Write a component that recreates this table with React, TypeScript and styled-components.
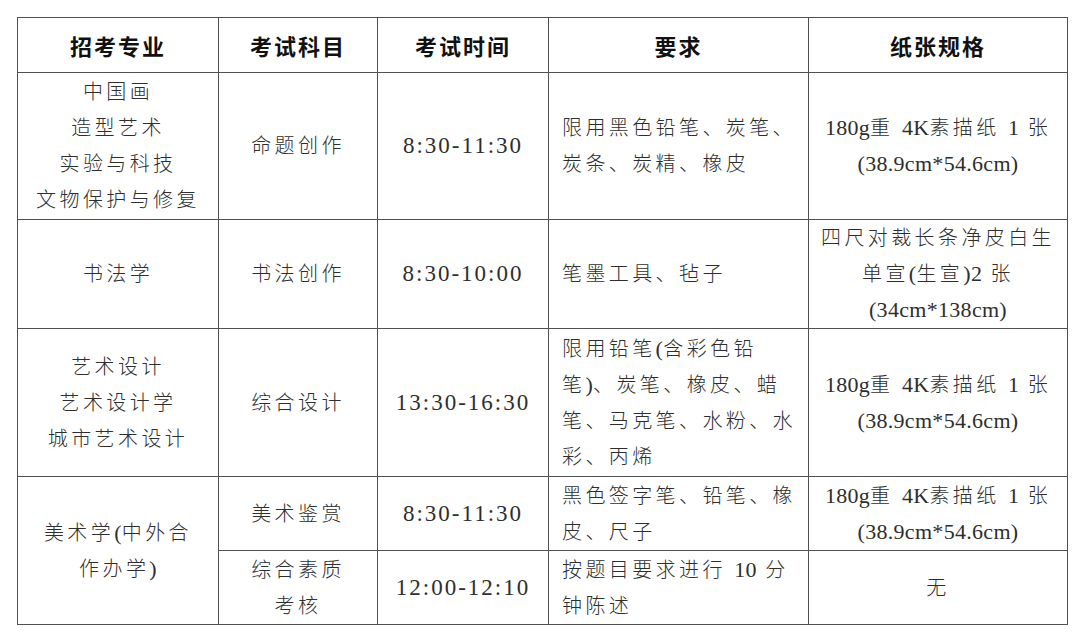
import styled, { createGlobalStyle } from "styled-components";

const GlobalStyle = createGlobalStyle`
  html, body {
    margin: 0;
    padding: 0;
    background: #fff;
  }
  body {
    font-family: "Liberation Serif", "Noto Sans CJK SC", serif;
    color: #2e2e2e;
  }
`;

type Row = {
  major?: string[];
  majorSpan?: number;
  subject: string[];
  time: string;
  need: string[];
  paper: string[];
  height: number;
};

const rows: Row[] = [
  {
    major: ["中国画", "造型艺术", "实验与科技", "文物保护与修复"],
    subject: ["命题创作"],
    time: "8:30-11:30",
    need: ["限用黑色铅笔、炭笔、", "炭条、炭精、橡皮"],
    paper: ["180g重 4K素描纸 1 张", "(38.9cm*54.6cm)"],
    height: 147,
  },
  {
    major: ["书法学"],
    subject: ["书法创作"],
    time: "8:30-10:00",
    need: ["笔墨工具、毡子"],
    paper: ["四尺对裁长条净皮白生", "单宣(生宣)2 张", "(34cm*138cm)"],
    height: 108,
  },
  {
    major: ["艺术设计", "艺术设计学", "城市艺术设计"],
    subject: ["综合设计"],
    time: "13:30-16:30",
    need: ["限用铅笔(含彩色铅", "笔)、炭笔、橡皮、蜡", "笔、马克笔、水粉、水", "彩、丙烯"],
    paper: ["180g重 4K素描纸 1 张", "(38.9cm*54.6cm)"],
    height: 148,
  },
  {
    major: ["美术学(中外合", "作办学)"],
    majorSpan: 2,
    subject: ["美术鉴赏"],
    time: "8:30-11:30",
    need: ["黑色签字笔、铅笔、橡", "皮、尺子"],
    paper: ["180g重 4K素描纸 1 张", "(38.9cm*54.6cm)"],
    height: 74,
  },
  {
    subject: ["综合素质", "考核"],
    time: "12:00-12:10",
    need: ["按题目要求进行 10 分", "钟陈述"],
    paper: ["无"],
    height: 74,
  },
];

const widths = [201, 159, 171, 260, 259];
const heads = ["招考专业", "考试科目", "考试时间", "要求", "纸张规格"];

// latin runs get tighter spacing than the CJK characters around them
function Mixed({ text }: { text: string }) {
  const parts = text.match(/[\x21-\x7e]+|[^\x21-\x7e]+/g) || [];
  return (
    <Line>
      {parts.map((p, i) =>
        /^[\x21-\x7e]+$/.test(p) ? <Latin key={i}>{p}</Latin> : <span key={i}>{p}</span>
      )}
    </Line>
  );
}

export default function App() {
  return (
    <>
      <GlobalStyle />
      <Page>
        <Table>
          <colgroup>
            {widths.map((w, i) => (
              <col key={i} style={{ width: w }} />
            ))}
          </colgroup>
          <thead>
            <tr>
              {heads.map((h) => (
                <HeadCell key={h}>{h}</HeadCell>
              ))}
            </tr>
          </thead>
          <tbody>
            {rows.map((r, i) => (
              <tr key={i} style={{ height: r.height }}>
                {r.major && (
                  <Cell rowSpan={r.majorSpan || 1}>
                    {r.major.map((l) => (
                      <Mixed key={l} text={l} />
                    ))}
                  </Cell>
                )}
                <Cell>
                  {r.subject.map((l) => (
                    <Mixed key={l} text={l} />
                  ))}
                </Cell>
                <TimeCell>{r.time}</TimeCell>
                <Cell $align="left">
                  {r.need.map((l) => (
                    <Mixed key={l} text={l} />
                  ))}
                </Cell>
                <Cell>
                  {r.paper.map((l) => (
                    <Mixed key={l} text={l} />
                  ))}
                </Cell>
              </tr>
            ))}
          </tbody>
        </Table>
      </Page>
    </>
  );
}

const Page = styled.div`
  padding: 17px 0 0 17px;
`;

const Table = styled.table`
  width: 1050px;
  border-collapse: collapse;
  table-layout: fixed;
`;

const HeadCell = styled.th`
  height: 54px;
  padding: 0;
  border: 1px solid #505050;
  font-family: "Noto Sans CJK SC", sans-serif;
  font-weight: 700;
  font-size: 22px;
  letter-spacing: 2px;
  color: #111;
  text-align: center;
  vertical-align: middle;
`;

const Cell = styled.td<{ $align?: "left" | "center" }>`
  padding: ${(p) => (p.$align === "left" ? "0 0 0 13px" : "0")};
  border: 1px solid #505050;
  font-size: 20px;
  font-weight: 300;
  line-height: 36px;
  letter-spacing: 3.4px;
  text-align: ${(p) => p.$align || "center"};
  vertical-align: middle;
  white-space: nowrap;
`;

const TimeCell = styled(Cell)`
  font-size: 23px;
  font-weight: 400;
  letter-spacing: 2px;
`;

const Line = styled.div`
  display: block;
`;

const Latin = styled.span`
  font-size: 22px;
  font-weight: 400;
  letter-spacing: 0.3px;
`;
